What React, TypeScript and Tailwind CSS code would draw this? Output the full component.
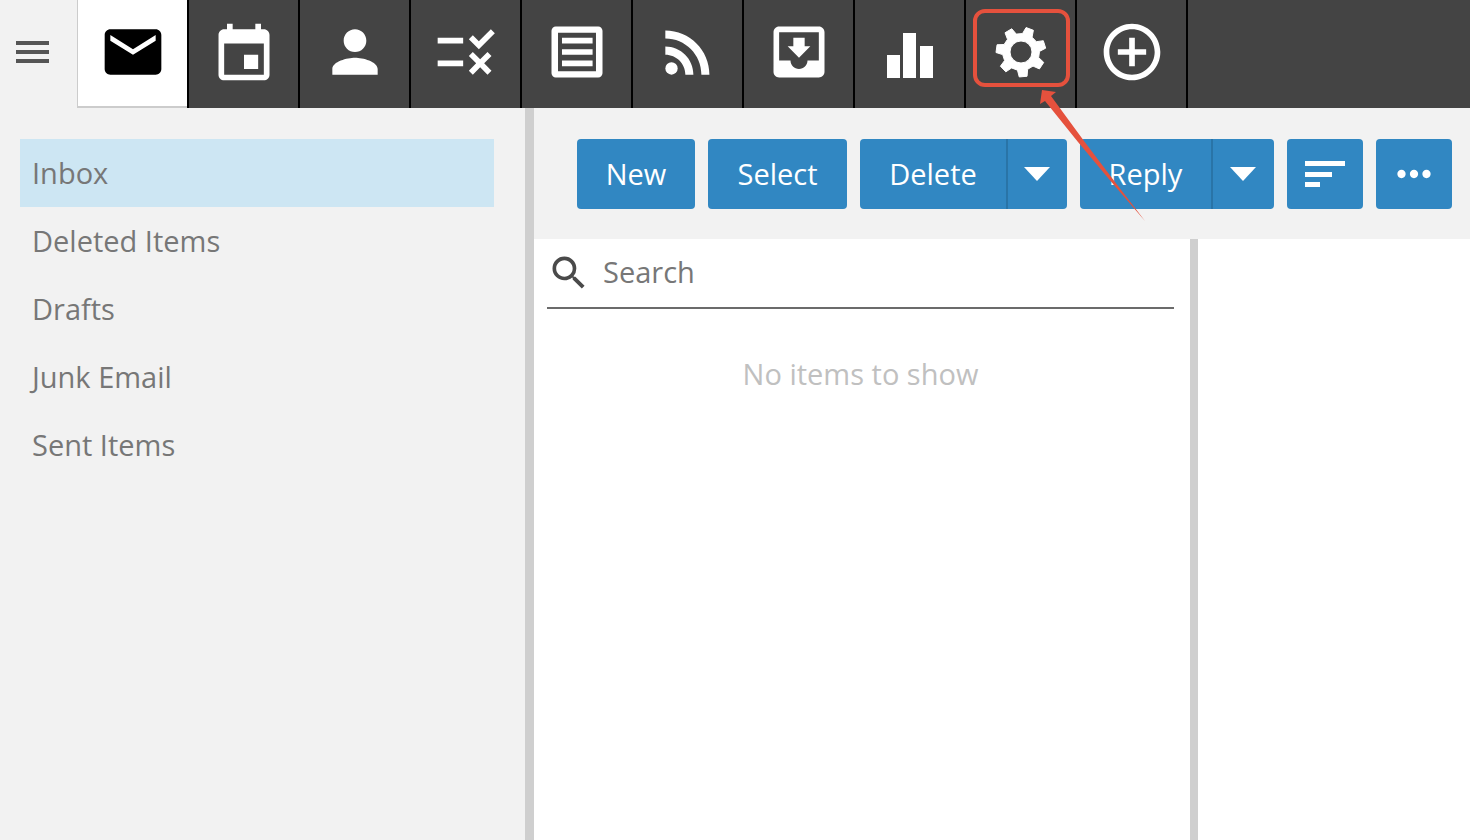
import type { ReactNode } from "react";
import {
  MdControlPoint,
  MdEmail,
  MdMoreHoriz,
  MdMoveToInbox,
  MdPerson,
  MdRssFeed,
  MdRule,
  MdSearch,
} from "react-icons/md";

const folders = ["Inbox", "Deleted Items", "Drafts", "Junk Email", "Sent Items"];

const CalendarIcon = () => (
  <svg viewBox="0 -1 24 24" fill="currentColor" className="size-[68px]">
    <path d="M17 12h-5v5h5v-5zM16 1v2H8V1H6v2H5c-1.11 0-1.99.9-1.99 2L3 19c0 1.1.89 2 2 2h14c1.1 0 2-.9 2-2V5c0-1.1-.9-2-2-2h-1V1h-2zm3 18H5V8h14v11z" />
  </svg>
);

const NotesIcon = () => (
  <svg viewBox="0 0 24 24" fill="currentColor" className="size-[68px]">
    <path
      fillRule="evenodd"
      d="M4.500 3h15c.8 0 1.500.7 1.500 1.500v15c0 .8-.7 1.500-1.500 1.500h-15c-.8 0-1.500-.7-1.500-1.500v-15C3 3.700 3.700 3 4.500 3zM5.300 5.200v13.600h13.400V5.200z"
    />
    <path d="M6.700 7h10.800v2H6.700zM6.700 11h10.800v2H6.700zM6.700 15h10.800v2H6.700z" />
  </svg>
);

const ReportsIcon = () => (
  <svg viewBox="0 0 68 68" fill="currentColor" className="size-[68px]">
    <path d="M11 37h13v23H11zM27 15h13v45H27zM44 28h13v32H44z" />
  </svg>
);

// seven teeth, the first one pointing almost straight down
const gearPath = () => {
  const points: string[] = [];
  for (let i = 0; i < 7; i++) {
    const base = 85 + (i * 360) / 7;
    [
      [-16, 18.5],
      [-9, 25],
      [9, 25],
      [16, 18.5],
    ].forEach(([offset, radius]) => {
      const angle = ((base + offset) * Math.PI) / 180;
      points.push(
        `${(34 + radius * Math.cos(angle)).toFixed(2)} ${(34 + radius * Math.sin(angle)).toFixed(2)}`
      );
    });
  }
  return `M${points.join("L")}ZM45 34a11 11 0 1 0-22 0a11 11 0 1 0 22 0Z`;
};

const GearIcon = () => (
  <svg viewBox="0 0 68 68" className="size-[68px]">
    <path
      d={gearPath()}
      fill="currentColor"
      fillRule="evenodd"
      stroke="currentColor"
      strokeWidth="1"
      strokeLinejoin="round"
    />
  </svg>
);

const CaretIcon = () => (
  <svg viewBox="0 0 26 14" fill="currentColor" className="w-[26px] h-[14px]">
    <path d="M0 0h26L13 14z" />
  </svg>
);

const SortIcon = () => (
  <svg viewBox="0 0 40 28" fill="currentColor" className="w-10 h-7">
    <path d="M0 1h40v5H0zM0 12h27v5H0zM0 22h15v5H0z" />
  </svg>
);

const Highlight = () => (
  <>
    <span className="absolute left-[9px] top-[9px] w-[97px] h-[78px] rounded-xl border-4 border-[#e5513d] pointer-events-none" />
    <svg
      viewBox="0 0 106 132"
      fill="#e5513d"
      className="absolute left-[76px] top-[90px] z-10 w-[106px] h-[132px] pointer-events-none"
    >
      <path d="M2 0L16 2L11 6L44 51Q74 91 105 131Q70 91 38 52L5 11L0 14Z" />
    </svg>
  </>
);

const modules: { label: string; icon: ReactNode; highlighted?: boolean }[] = [
  { label: "Calendar", icon: <CalendarIcon /> },
  { label: "Contacts", icon: <MdPerson className="size-[68px]" /> },
  { label: "Tasks", icon: <MdRule className="size-[68px]" /> },
  { label: "Notes", icon: <NotesIcon /> },
  { label: "News Feeds", icon: <MdRssFeed className="size-[68px]" /> },
  { label: "File Storage", icon: <MdMoveToInbox className="size-[68px]" /> },
  { label: "Reports", icon: <ReportsIcon /> },
  { label: "Settings", icon: <GearIcon />, highlighted: true },
  { label: "New Tab", icon: <MdControlPoint className="size-[68px]" /> },
];

const TopBar = () => (
  <header className="flex h-[108px] shrink-0 bg-[#444444]">
    <button
      aria-label="Menu"
      className="flex w-[77px] items-center justify-center bg-[#f2f2f2] pr-3 text-[#555555]"
    >
      <svg viewBox="0 0 33 24" fill="currentColor" className="-mt-1 w-[33px] h-6">
        <path d="M0 1h33v4H0zM0 10h33v4H0zM0 19h33v4H0z" />
      </svg>
    </button>
    <nav className="flex">
      <button
        aria-label="Email"
        className="flex w-[110px] items-center justify-center border-b-2 border-l border-[#cccccc] bg-white pb-0.5 text-black"
      >
        <MdEmail className="size-[68px]" />
      </button>
      {modules.map((item) => (
        <div key={item.label} className="relative">
          <button
            aria-label={item.label}
            className="flex h-full w-[111px] items-center justify-center border-l-2 border-black pb-1 text-white"
          >
            {item.icon}
          </button>
          {item.highlighted && <Highlight />}
        </div>
      ))}
      <div className="w-0.5 bg-black" />
    </nav>
  </header>
);

const Sidebar = () => (
  <aside className="w-[534px] shrink-0 border-r-9 border-[#cfcfcf] pl-5 pr-[31px] pt-[31px]">
    <ul>
      {folders.map((folder, index) => (
        <li key={folder}>
          <a
            href="#"
            className={`flex h-[68px] items-center px-3 pb-px ${
              index === 0 ? "bg-[#cde6f3]" : ""
            }`}
          >
            {folder}
          </a>
        </li>
      ))}
    </ul>
  </aside>
);

const Toolbar = () => (
  <div className="flex h-[131px] shrink-0 gap-[13px] pl-[43px] pt-[31px] text-white">
    <button className="h-[70px] w-[118px] rounded bg-[#3187c2]">New</button>
    <button className="h-[70px] w-[139px] rounded bg-[#3187c2]">Select</button>
    <div className="flex h-[70px] overflow-hidden rounded bg-[#3187c2]">
      <button className="w-[146px]">Delete</button>
      <button
        aria-label="Delete options"
        className="flex w-[61px] items-center justify-center border-l-2 border-[#2974a7] pr-0.5"
      >
        <CaretIcon />
      </button>
    </div>
    <div className="flex h-[70px] overflow-hidden rounded bg-[#3187c2]">
      <button className="w-[131px]">Reply</button>
      <button
        aria-label="Reply options"
        className="flex w-[63px] items-center justify-center border-l-2 border-[#2974a7] pr-0.5"
      >
        <CaretIcon />
      </button>
    </div>
    <button
      aria-label="Sort"
      className="flex h-[70px] w-[76px] items-center justify-center rounded bg-[#3187c2]"
    >
      <SortIcon />
    </button>
    <button
      aria-label="More"
      className="flex h-[70px] w-[76px] items-center justify-center rounded bg-[#3187c2]"
    >
      <MdMoreHoriz className="size-[50px]" />
    </button>
  </div>
);

const MessageList = () => (
  <section className="w-[664px] shrink-0 border-r-8 border-[#cfcfcf] px-[13px]">
    <label className="mr-[3px] flex h-[70px] items-center border-b-2 border-[#6b6b6b]">
      <MdSearch className="size-11 shrink-0 text-[#4a4a4a]" />
      <input
        type="text"
        aria-label="Search"
        placeholder="Search"
        className="ml-3 w-full min-w-0 pb-0.5 outline-none placeholder:text-[#777777]"
      />
    </label>
    <p className="mr-[3px] pt-11 text-center text-[#c0c0c0]">No items to show</p>
  </section>
);

const App = () => {
  return (
    <div className="flex min-h-screen flex-col overflow-x-hidden bg-[#f2f2f2] font-['Open_Sans',sans-serif] text-[29px] leading-[42px] text-[#777777]">
      <TopBar />
      <div className="flex grow">
        <Sidebar />
        <main className="flex min-w-0 grow flex-col">
          <Toolbar />
          <div className="flex grow bg-white">
            <MessageList />
            <section className="grow" />
          </div>
        </main>
      </div>
    </div>
  );
};

export default App;
